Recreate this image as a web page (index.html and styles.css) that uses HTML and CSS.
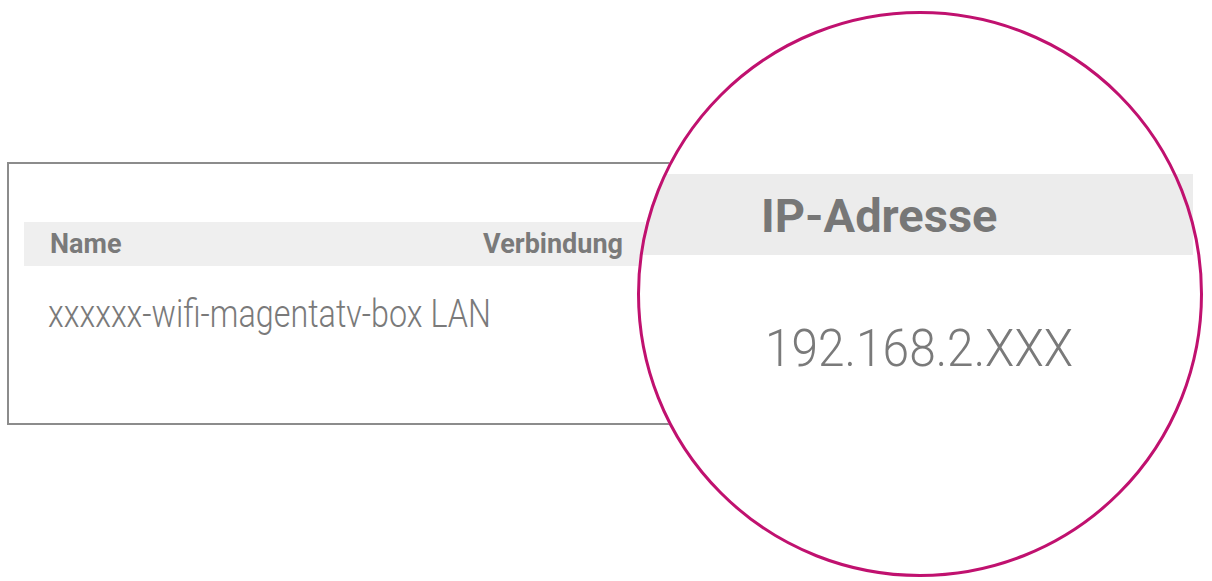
FILE: index.html
```html
<!DOCTYPE html>
<html lang="de">
<head>
<meta charset="utf-8">
<title>IP-Adresse</title>
<link rel="stylesheet" href="styles.css">
</head>
<body>
<div class="stage">
  <div class="table-box">
    <div class="table-head">
      <span class="head-cell">Name</span>
      <span class="head-cell">Verbindung</span>
    </div>
    <div class="table-row"><span class="light-text row-text">xxxxxx-wifi-magentatv-box LAN</span></div>
  </div>
  <div class="lens">
    <div class="lens-head"><span class="lens-title">IP-Adresse</span></div>
    <div class="lens-value"><span class="light-text ip-text">192.168.2.XXX</span></div>
  </div>
</div>
</body>
</html>
```
FILE: styles.css
```css
html, body {
  margin: 0;
  padding: 0;
  background: #ffffff;
}
body {
  font-family: Roboto, "Liberation Sans", Arial, sans-serif;
  color: #777777;
}
.stage {
  position: relative;
  width: 1212px;
  height: 581px;
  overflow: hidden;
  display: flex;
  flex-direction: column;
}
.table-box {
  margin: 162px 0 0 7px;
  width: 820px;
  height: 263px;
  box-sizing: border-box;
  border: 2px solid #8c8c8c;
  padding: 58px 0 0 15px;
}
.table-head {
  width: 621px;
  height: 44px;
  box-sizing: border-box;
  background: #efefef;
  display: flex;
  justify-content: space-between;
  padding: 0 22px 0 26px;
}
.head-cell {
  font-weight: 700;
  font-size: 27px;
  line-height: 44px;
  color: #7a7a7a;
}
.table-row {
  margin-top: 26px;
  padding-left: 24px;
  height: 44px;
}
.light-text {
  display: inline-block;
  font-weight: 300;
  color: #7a7a7a;
  transform-origin: left center;
  white-space: nowrap;
}
.row-text {
  font-size: 38px;
  line-height: 44px;
  transform: scaleX(0.85);
}
.lens {
  position: absolute;
  left: 637px;
  top: 11px;
  width: 566px;
  height: 566px;
  border-radius: 50%;
  background: #ffffff;
  padding-top: 163px;
  box-sizing: border-box;
}
.lens::after {
  content: "";
  position: absolute;
  inset: 0;
  border: 3px solid #c0116f;
  border-radius: 50%;
  pointer-events: none;
}
.lens-head {
  width: 556px;
  height: 81px;
  box-sizing: border-box;
  background: #ececec;
  padding: 3px 0 0 124px;
  clip-path: path("M 556 0 L 26.7 0 A 283 283 0 0 0 2.7 81 L 556 81 Z");
}
.lens-title {
  font-weight: 700;
  font-size: 47px;
  line-height: 78px;
  color: #777777;
}
.lens-value {
  margin-top: 64px;
  padding-left: 128px;
  height: 60px;
}
.ip-text {
  font-size: 52px;
  line-height: 60px;
  transform: scaleX(0.92);
}
```
